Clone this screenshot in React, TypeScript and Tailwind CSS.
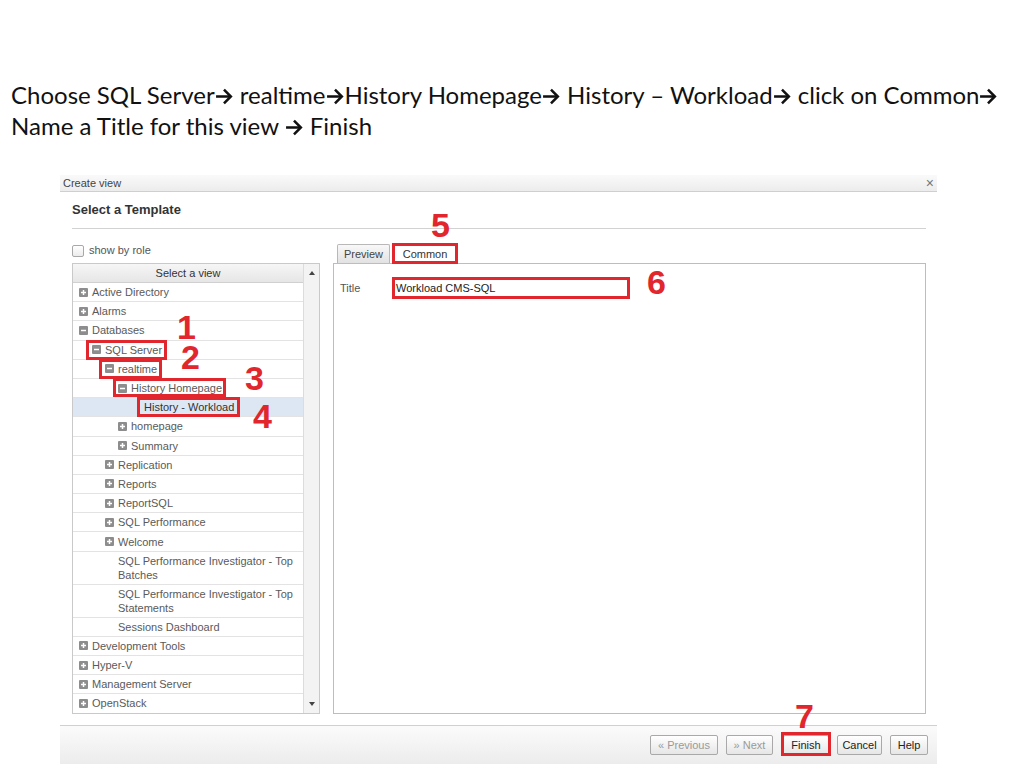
import React from 'react';

// ─── small drawings ─────────────────────────────────────────────────────────

function Arrow() {
  return (
    <svg
      viewBox="0 0 18 16"
      className="inline-block w-[19px] h-[17px] align-[-1px]"
      fill="none"
      stroke="#111"
      strokeWidth={2.4}
    >
      <path d="M1 8h14" />
      <path d="M8.5 1.5L15 8l-6.5 6.5" />
    </svg>
  );
}

function Expander({ open }: { open: boolean }) {
  return (
    <svg viewBox="0 0 9 9" className="w-[9px] h-[9px] shrink-0">
      <rect width="9" height="9" rx="1" fill="#8d8d8d" />
      <path d="M2 4.5h5" stroke="#fff" strokeWidth={1.5} />
      {!open && <path d="M4.5 2v5" stroke="#fff" strokeWidth={1.5} />}
    </svg>
  );
}

function RedBox({ className }: { className: string }) {
  return <span className={`pointer-events-none absolute border-[3px] border-[#e1262d] ${className}`} />;
}

// ─── tree data ──────────────────────────────────────────────────────────────

type Row = {
  label: string;
  level: number;
  icon?: 'plus' | 'minus';
  selected?: boolean;
  tall?: boolean;
  box?: string;
};

const ROWS: Row[] = [
  { label: 'Active Directory', level: 0, icon: 'plus' },
  { label: 'Alarms', level: 0, icon: 'plus' },
  { label: 'Databases', level: 0, icon: 'minus' },
  { label: 'SQL Server', level: 1, icon: 'minus', box: '-left-[6px] -right-[5px] -top-[3px] -bottom-[3px]' },
  { label: 'realtime', level: 2, icon: 'minus', box: '-left-[6px] -right-[5px] -top-[3px] -bottom-[3px]' },
  { label: 'History Homepage', level: 3, icon: 'minus', box: '-left-[5px] -right-[4px] -top-[3px] -bottom-[2px]' },
  { label: 'History - Workload', level: 4, selected: true, box: 'left-[6px] -right-[6px] -top-[3px] -bottom-[3px]' },
  { label: 'homepage', level: 3, icon: 'plus' },
  { label: 'Summary', level: 3, icon: 'plus' },
  { label: 'Replication', level: 2, icon: 'plus' },
  { label: 'Reports', level: 2, icon: 'plus' },
  { label: 'ReportSQL', level: 2, icon: 'plus' },
  { label: 'SQL Performance', level: 2, icon: 'plus' },
  { label: 'Welcome', level: 2, icon: 'plus' },
  { label: 'SQL Performance Investigator - Top Batches', level: 2, tall: true },
  { label: 'SQL Performance Investigator - Top Statements', level: 2, tall: true },
  { label: 'Sessions Dashboard', level: 2 },
  { label: 'Development Tools', level: 0, icon: 'plus' },
  { label: 'Hyper-V', level: 0, icon: 'plus' },
  { label: 'Management Server', level: 0, icon: 'plus' },
  { label: 'OpenStack', level: 0, icon: 'plus' },
];

const INDENT = ['pl-[6px]', 'pl-[19px]', 'pl-[32px]', 'pl-[45px]', 'pl-[58px]'];

function TreeRow({ row }: { row: Row }) {
  return (
    <div
      className={`flex border-b border-[#e3e3e3] pr-[2px] ${INDENT[row.level]} ${
        row.tall ? 'h-[33px] items-start pt-[2px]' : 'h-[19.2px] items-center'
      } ${row.selected ? 'bg-[#dde7f4]' : 'bg-white'}`}
    >
      <span className="relative flex items-start gap-[4px] leading-[14px]">
        {row.icon ? (
          <span className="pt-[2.5px]">
            <Expander open={row.icon === 'minus'} />
          </span>
        ) : (
          <span className="w-[9px] shrink-0" />
        )}
        <span className={row.selected ? 'text-[#333]' : 'text-[#5a5a5a]'}>{row.label}</span>
        {row.box && <RedBox className={row.box} />}
      </span>
    </div>
  );
}

// ─── buttons ────────────────────────────────────────────────────────────────

function Btn({ label, w, disabled }: { label: string; w: string; disabled?: boolean }) {
  return (
    <div
      className={`${w} h-[20px] flex items-center justify-center border border-[#a9a9a9] rounded-[2px] bg-gradient-to-b from-white to-[#e6e6e6] ${
        disabled ? 'text-[#9a9a9a]' : 'text-[#222]'
      }`}
    >
      {label}
    </div>
  );
}

// ─── page ───────────────────────────────────────────────────────────────────

const NUMS = [
  { n: '5', pos: 'left-[431px] top-[212px]' },
  { n: '6', pos: 'left-[647px] top-[269px]' },
  { n: '1', pos: 'left-[177px] top-[314px]' },
  { n: '2', pos: 'left-[181px] top-[344px]' },
  { n: '3', pos: 'left-[245px] top-[365px]' },
  { n: '4', pos: 'left-[253px] top-[403px]' },
  { n: '7', pos: 'left-[795px] top-[703px]' },
];

export default function App() {
  return (
    <div className="relative w-[1024px] h-[768px] bg-white overflow-hidden">
      {/* Instruction text */}
      <div className="pt-[79px] pl-[11px] text-[24px] leading-[31px] text-[#111] font-['Lato',sans-serif]">
        <div className="whitespace-nowrap">
          Choose SQL Server<Arrow /> realtime<Arrow />History Homepage<Arrow /> History – Workload<Arrow /> click on Common<Arrow />
        </div>
        <div className="whitespace-nowrap">
          Name a Title for this view <Arrow /> Finish
        </div>
      </div>

      {/* Dialog */}
      <div className="ml-[60px] mt-[34px] w-[877px] bg-white text-[11px] font-['Liberation_Sans',Arial,sans-serif]">
        <div className="h-[17px] flex items-center justify-between pl-[3px] pr-[3px] border-b border-[#cfcfcf] bg-gradient-to-b from-[#fafafa] to-[#ececec] text-[#444]">
          <span>Create view</span>
          <span className="text-[#777] text-[14px] leading-none">×</span>
        </div>

        <div className="pl-[12px] pr-[11px]">
          <div className="h-[37px] flex items-center border-b border-[#d2d2d2] text-[13px] font-bold text-[#333]">
            Select a Template
          </div>

          <div className="flex">
            {/* Left: tree */}
            <div className="w-[248px]">
              <div className="mt-[15px] h-[13px] flex items-center gap-[5px] text-[#555]">
                <span className="w-[12px] h-[12px] border border-[#a8a8a8] rounded-[2px] bg-gradient-to-b from-white to-[#ececec]" />
                <span>show by role</span>
              </div>
              <div className="mt-[6px] h-[451px] border border-[#c9c9c9] flex overflow-hidden">
                <div className="flex-1 border-r border-[#dcdcdc]">
                  <div className="h-[19px] flex items-center justify-center border-b border-[#d0d0d0] bg-gradient-to-b from-[#f6f6f6] to-[#e6e6e6] text-[#333]">
                    Select a view
                  </div>
                  {ROWS.map(r => (
                    <TreeRow key={r.label} row={r} />
                  ))}
                </div>
                <div className="w-[15px] flex flex-col items-center justify-between bg-[#f3f3f3] py-[7px]">
                  <svg viewBox="0 0 6 4" className="w-[6px] h-[4px]">
                    <path d="M0 4L3 0l3 4z" fill="#444" />
                  </svg>
                  <svg viewBox="0 0 6 4" className="w-[6px] h-[4px]">
                    <path d="M0 0h6L3 4z" fill="#444" />
                  </svg>
                </div>
              </div>
            </div>

            {/* Right: tabs */}
            <div className="ml-[13px] w-[593px]">
              <div className="mt-[15px] h-[19px] flex items-end gap-[3px] pl-[4px]">
                <div className="w-[53px] h-[19px] flex items-center justify-center border border-[#b8b8b8] border-b-0 rounded-t-[2px] bg-gradient-to-b from-[#f8f8f8] to-[#e2e2e2] text-[#444]">
                  Preview
                </div>
                <div className="relative w-[64px] h-[20px] -mb-px z-10 flex items-center justify-center border border-[#b8b8b8] border-b-0 rounded-t-[2px] bg-white text-[#333]">
                  Common
                  <RedBox className="-left-[2px] -right-[2px] -top-[2px] -bottom-[0px]" />
                </div>
              </div>
              <div className="h-[451px] border border-[#bdbdbd] pt-[14px] pl-[6px]">
                <div className="flex items-center">
                  <span className="w-[53px] text-[#555]">Title</span>
                  <div className="relative w-[236px] h-[20px] flex items-center pl-[2px] border border-[#bcbcbc] text-[#222]">
                    Workload CMS-SQL
                    <RedBox className="-left-[2px] -right-[2px] -top-[2px] -bottom-[2px]" />
                  </div>
                </div>
              </div>
            </div>
          </div>
        </div>

        {/* Footer */}
        <div className="mt-[11px] h-[39px] border-t border-[#d0d0d0] bg-gradient-to-b from-[#fbfbfb] to-[#ececec] flex items-center justify-end gap-2 pr-[9px]">
          <Btn label="« Previous" w="w-[68px]" disabled />
          <Btn label="» Next" w="w-[47px]" disabled />
          <div className="relative ml-[2px]">
            <Btn label="Finish" w="w-[46px]" />
            <RedBox className="-left-[2px] -right-[2px] -top-[3px] -bottom-[1px]" />
          </div>
          <Btn label="Cancel" w="w-[45px]" />
          <Btn label="Help" w="w-[38px]" />
        </div>
      </div>

      {/* Annotation numbers */}
      {NUMS.map(({ n, pos }) => (
        <span
          key={n}
          className={`absolute ${pos} text-[34px] leading-[26px] font-bold text-[#e1262d] font-['Liberation_Sans',Arial,sans-serif]`}
        >
          {n}
        </span>
      ))}
    </div>
  );
}
